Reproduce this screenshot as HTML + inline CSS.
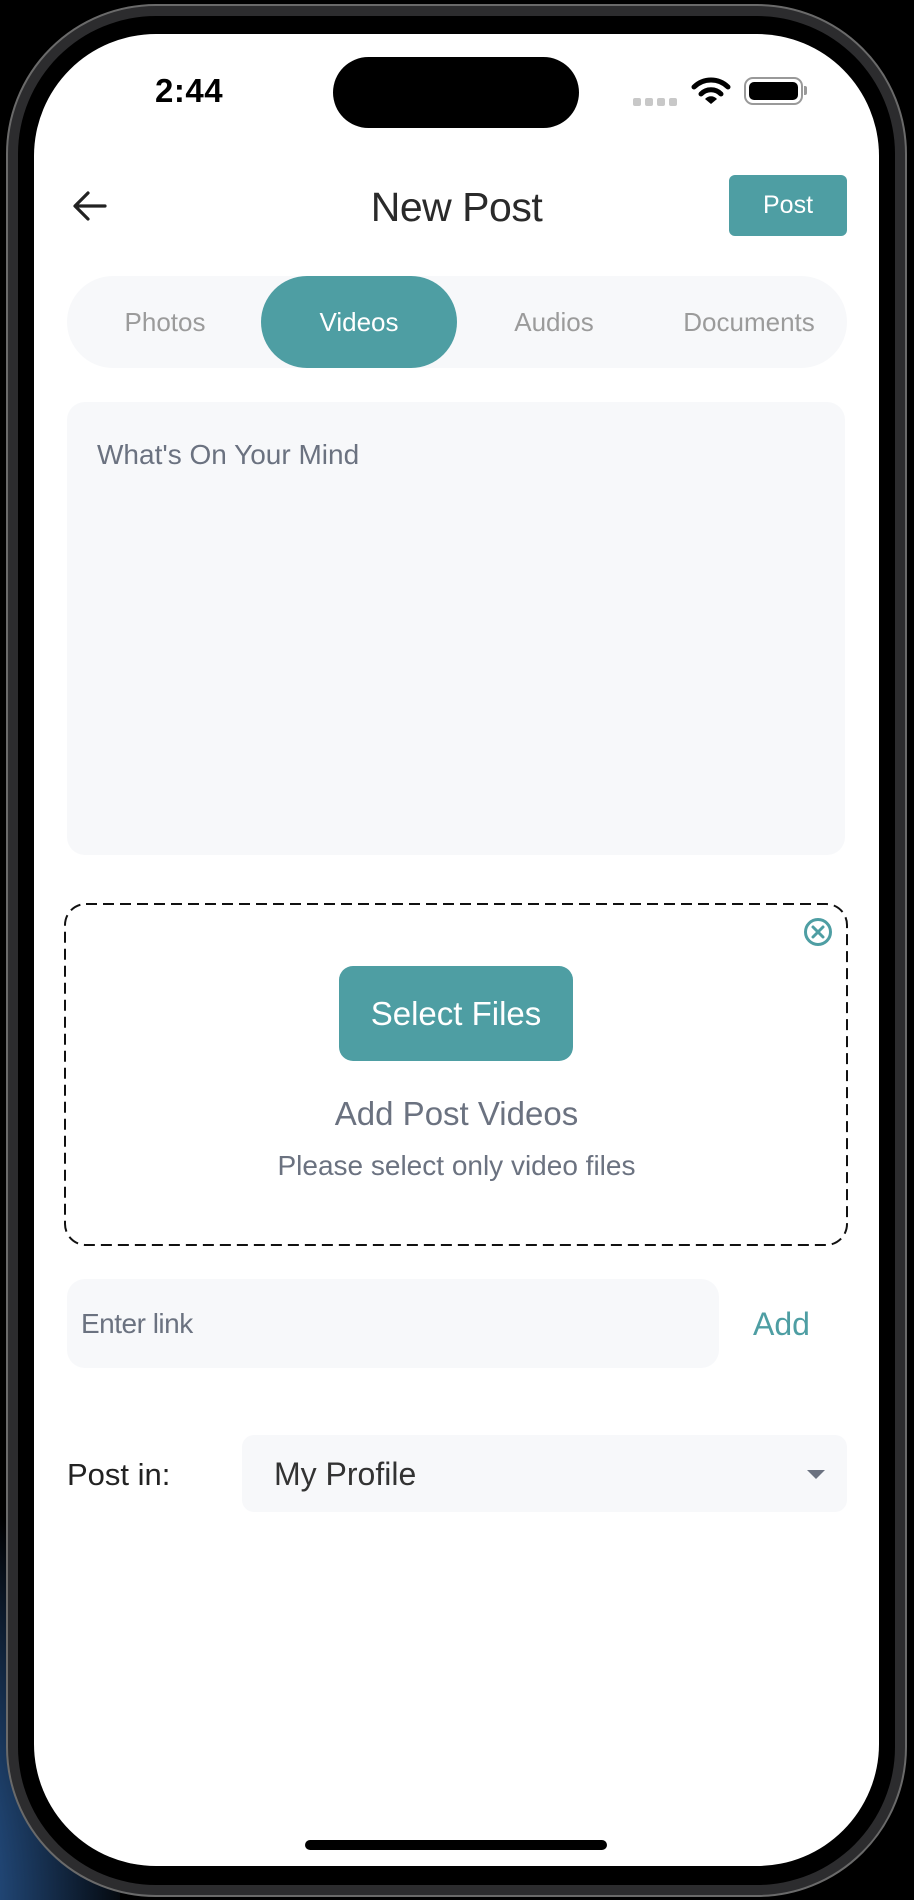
<!DOCTYPE html>
<html style="width:914px;height:1900px;overflow:hidden;background:#000"><head><meta charset="utf-8"><style>
*{margin:0;padding:0;box-sizing:border-box}
body{width:914px;height:1900px;background:#000;overflow:hidden;font-family:"Liberation Sans",sans-serif}
.wrap{position:relative;width:914px;height:1900px;overflow:hidden}
.glow{position:absolute;left:-200px;top:1450px;width:320px;height:450px;background:radial-gradient(ellipse at 0% 100%,#5a96d6 0%,#2a5a96 35%,#000 75%)}
.frame{position:absolute;left:6px;top:4px;width:901px;height:1893px;border-radius:150px;background:#2c2c2e;border:2px solid #6a6a6a}
.bezel{position:absolute;left:18px;top:16px;width:877px;height:1869px;border-radius:138px;background:#000}
.screen{position:absolute;left:34px;top:34px;width:845px;height:1832px;border-radius:122px;background:#fff;overflow:hidden}
.abs{position:absolute}
.teal{background:#4e9ea3}
</style></head><body><div class="wrap">
<div class="glow"></div>
<div class="frame"></div>
<div class="bezel"></div>
<div class="screen">
  <div class="abs" style="left:121px;top:38px;font-size:33px;font-weight:bold;color:#000;letter-spacing:0.5px">2:44</div>
  <div class="abs" style="left:299px;top:23px;width:246px;height:71px;border-radius:36px;background:#000"></div>
  <div class="abs" style="left:599px;top:64px;width:44px;height:8px">
    <span class="abs" style="left:0;width:8px;height:8px;border-radius:2px;background:#c8c8c8"></span>
    <span class="abs" style="left:12px;width:8px;height:8px;border-radius:2px;background:#c8c8c8"></span>
    <span class="abs" style="left:24px;width:8px;height:8px;border-radius:2px;background:#c8c8c8"></span>
    <span class="abs" style="left:36px;width:8px;height:8px;border-radius:2px;background:#c8c8c8"></span>
  </div>
  <svg class="abs" style="left:657px;top:43px" width="40" height="28" viewBox="0 0 40 28">
    <path d="M3 10 A24 24 0 0 1 37 10" stroke="#000" stroke-width="5" fill="none" stroke-linecap="round"/>
    <path d="M10 17 A14 14 0 0 1 30 17" stroke="#000" stroke-width="5" fill="none" stroke-linecap="round"/>
    <path d="M14 22 L20 27 L26 22 A8 8 0 0 0 14 22Z" fill="#000"/>
  </svg>
  <div class="abs" style="left:710px;top:43px;width:59px;height:28px;border:2px solid #999;border-radius:9px;padding:3px"><div style="width:100%;height:100%;background:#000;border-radius:5px"></div></div>
  <div class="abs" style="left:770px;top:52px;width:3px;height:9px;background:#999;border-radius:0 2px 2px 0"></div>

  <svg class="abs" style="left:38px;top:156px" width="36" height="32" viewBox="0 0 36 32"><path d="M33 16H4M16 3L3 16L16 29" stroke="#222" stroke-width="3.2" fill="none" stroke-linecap="round" stroke-linejoin="round"/></svg>
  <div class="abs" style="left:0;width:845px;top:150px;text-align:center;font-size:41px;color:#2a2a2a;letter-spacing:-0.5px">New Post</div>
  <div class="abs teal" style="left:695px;top:141px;width:118px;height:61px;border-radius:6px;color:#fff;font-size:25px;text-align:center;line-height:61px">Post</div>

  <div class="abs" style="left:33px;top:242px;width:780px;height:92px;border-radius:46px;background:#f7f8fa"></div>
  <div class="abs teal" style="left:227px;top:242px;width:196px;height:92px;border-radius:46px"></div>
  <div class="abs" style="left:33px;top:242px;width:196px;height:92px;line-height:92px;text-align:center;font-size:26px;color:#9b9b9b">Photos</div>
  <div class="abs" style="left:227px;top:242px;width:196px;height:92px;line-height:92px;text-align:center;font-size:26px;color:#fff">Videos</div>
  <div class="abs" style="left:422px;top:242px;width:196px;height:92px;line-height:92px;text-align:center;font-size:26px;color:#9b9b9b">Audios</div>
  <div class="abs" style="left:617px;top:242px;width:196px;height:92px;line-height:92px;text-align:center;font-size:26px;color:#9b9b9b">Documents</div>

  <div class="abs" style="left:33px;top:368px;width:778px;height:453px;border-radius:18px;background:#f7f8fa"></div>
  <div class="abs" style="left:63px;top:405px;font-size:28px;color:#6b7280">What's On Your Mind</div>

  <svg class="abs" style="left:30px;top:869px" width="784" height="343" viewBox="0 0 784 343"><rect x="1" y="1" width="782" height="341" rx="21" fill="none" stroke="#111" stroke-width="2" stroke-dasharray="11 6"/></svg>
  <svg class="abs" style="left:769px;top:883px" width="30" height="30" viewBox="0 0 30 30"><circle cx="15" cy="15" r="12.5" stroke="#4e9ea3" stroke-width="3" fill="none"/><path d="M10 10L20 20M20 10L10 20" stroke="#4e9ea3" stroke-width="3" stroke-linecap="round"/></svg>
  <div class="abs teal" style="left:305px;top:932px;width:234px;height:95px;border-radius:14px;color:#fff;font-size:33px;text-align:center;line-height:95px">Select Files</div>
  <div class="abs" style="left:0;width:845px;top:1061px;text-align:center;font-size:33px;color:#6b7280">Add Post Videos</div>
  <div class="abs" style="left:0;width:845px;top:1116px;text-align:center;font-size:28px;color:#6b7280">Please select only video files</div>

  <div class="abs" style="left:33px;top:1245px;width:652px;height:89px;border-radius:18px;background:#f7f8fa"></div>
  <div class="abs" style="left:47px;top:1274px;font-size:28px;color:#6b7280;letter-spacing:-0.5px">Enter link</div>
  <div class="abs" style="left:719px;top:1272px;font-size:32px;color:#4e9ea3">Add</div>

  <div class="abs" style="left:33px;top:1423px;font-size:31px;color:#222">Post in:</div>
  <div class="abs" style="left:208px;top:1401px;width:605px;height:77px;border-radius:12px;background:#f7f8fa"></div>
  <div class="abs" style="left:240px;top:1422px;font-size:32px;color:#333">My Profile</div>
  <div class="abs" style="left:773px;top:1436px;width:0;height:0;border-left:9px solid transparent;border-right:9px solid transparent;border-top:9px solid #6b7280"></div>

  <div class="abs" style="left:271px;top:1806px;width:302px;height:10px;border-radius:5px;background:#000"></div>
</div>
</div></body></html>
